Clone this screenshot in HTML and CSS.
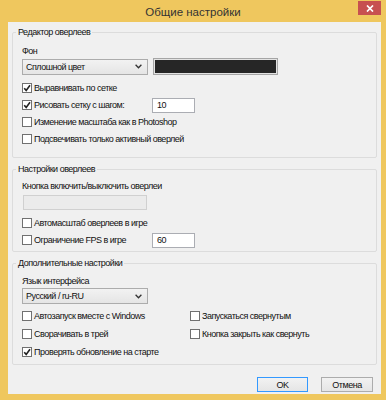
FILE: index.html
```html
<!DOCTYPE html>
<html lang="ru">
<head>
    <meta charset="UTF-8">
    <title>Общие настройки</title>
    <link rel="stylesheet" href="styles.css">
</head>
<body>

<div class="window">
    <div class="titlebar">
        <span class="title">Общие настройки</span>
        <button class="close" type="button">
            <svg width="8" height="7" viewBox="0 0 8 7"><path d="M1 0.5 L7 6.5 M7 0.5 L1 6.5" stroke="#fff" stroke-width="1.7"/></svg>
        </button>
    </div>

    <div class="client">
        <!-- Редактор -->
        <fieldset class="group group-editor">
            <legend>Редактор оверлеев</legend>
            <div class="label">Фон</div>
            <div class="bg-row">
                <div class="combo">
                    <span>Сплошной цвет</span>
                    <svg width="7" height="5" viewBox="0 0 7 5"><polyline points="0.6,0.8 3.5,3.8 6.4,0.8" fill="none" stroke="#333" stroke-width="1.3"/></svg>
                </div>
                <button class="color-btn" type="button"><span class="swatch"></span></button>
            </div>
            <div class="checks">
                <label class="check"><span class="box"><svg width="8" height="8" viewBox="0 0 8 8"><path d="M1.2 4.2 L3.2 6.4 L7 1.2" fill="none" stroke="#222" stroke-width="1.6"/></svg></span>Выравнивать по сетке</label>
                <div class="step-row">
                    <label class="check"><span class="box"><svg width="8" height="8" viewBox="0 0 8 8"><path d="M1.2 4.2 L3.2 6.4 L7 1.2" fill="none" stroke="#222" stroke-width="1.6"/></svg></span>Рисовать сетку с шагом:</label>
                    <input type="text" class="num" value="10">
                </div>
                <label class="check"><span class="box"></span>Изменение масштаба как в Photoshop</label>
                <label class="check"><span class="box"></span>Подсвечивать только активный оверлей</label>
            </div>
        </fieldset>

        <!-- Оверлеи -->
        <fieldset class="group group-overlays">
            <legend>Настройки оверлеев</legend>
            <div class="label">Кнопка включить/выключить оверлеи</div>
            <div class="hotkey"></div>
            <div class="checks">
                <label class="check"><span class="box"></span>Автомасштаб оверлеев в игре</label>
                <div class="step-row">
                    <label class="check"><span class="box"></span>Ограничение FPS в игре</label>
                    <input type="text" class="num" value="60">
                </div>
            </div>
        </fieldset>

        <!-- Дополнительно -->
        <fieldset class="group group-extra">
            <legend>Дополнительные настройки</legend>
            <div class="label">Язык интерфейса</div>
            <div class="combo">
                <span>Русский / ru-RU</span>
                <svg width="7" height="5" viewBox="0 0 7 5"><polyline points="0.6,0.8 3.5,3.8 6.4,0.8" fill="none" stroke="#333" stroke-width="1.3"/></svg>
            </div>
            <div class="opts">
                <label class="check"><span class="box"></span>Автозапуск вместе с Windows</label>
                <label class="check"><span class="box"></span>Запускаться свернутым</label>
                <label class="check"><span class="box"></span>Сворачивать в трей</label>
                <label class="check"><span class="box"></span>Кнопка закрыть как свернуть</label>
                <label class="check"><span class="box"><svg width="8" height="8" viewBox="0 0 8 8"><path d="M1.2 4.2 L3.2 6.4 L7 1.2" fill="none" stroke="#222" stroke-width="1.6"/></svg></span>Проверять обновление на старте</label>
            </div>
        </fieldset>

        <div class="actions">
            <button type="button" class="btn btn-default">OK</button>
            <button type="button" class="btn">Отмена</button>
        </div>
    </div>
</div>

</body>
</html>
```

FILE: styles.css
```css
body {
    margin: 0;
    width: 386px;
    height: 400px;
    background: #efc75e;
    font-family: "Liberation Sans", Arial, sans-serif;
    font-size: 9px;
    letter-spacing: -0.5px;
    color: #111;
}
.window {
    display: flex;
    flex-direction: column;
    height: 400px;
}
.titlebar {
    position: relative;
    height: 22px;
    display: flex;
    justify-content: center;
    align-items: center;
}
.title {
    font-size: 11.5px;
    letter-spacing: 0;
    color: #333;
    padding-top: 2px;
}
.close {
    position: absolute;
    top: 1px;
    right: 5px;
    width: 23px;
    height: 14px;
    padding: 0;
    border: none;
    background: #c75050;
    display: flex;
    align-items: center;
    justify-content: center;
}
.client {
    flex: 1;
    margin: 0 5px 6px 8px;
    padding: 5px 4px 0;
    background: #f0f0f0;
    display: flex;
    flex-direction: column;
}

/* группы */
.group {
    margin: 0;
    min-width: 0;
    border: 1px solid #dcdcdc;
    border-radius: 2px;
    padding: 8px 9px 10px;
}
.group + .group {
    margin-top: 6px;
}
.group legend {
    margin-left: -6px;
    padding: 0 2px;
    line-height: 11px;
}
.group-overlays {
    padding-top: 6px;
    padding-bottom: 3px;
}
.group-extra {
    padding-top: 7px;
    padding-bottom: 4px;
}
.label {
    line-height: 11px;
}

/* поля */
.bg-row {
    display: flex;
    align-items: center;
    gap: 5px;
    margin-top: 1px;
}
.combo {
    width: 126px;
    height: 16px;
    box-sizing: border-box;
    border: 1px solid #acacac;
    background: linear-gradient(#f2f2f2, #e5e5e5);
    display: flex;
    align-items: center;
    justify-content: space-between;
    padding: 0 5px 0 3px;
}
.group-extra .combo {
    margin-top: 1px;
}
.color-btn {
    width: 125px;
    height: 17px;
    padding: 1px;
    border: 1px solid #a5a5a5;
    background: #e3e3e3;
}
.swatch {
    display: block;
    height: 100%;
    background: #262626;
}
.hotkey {
    width: 124px;
    height: 15px;
    box-sizing: border-box;
    margin: 3px 0 0 1px;
    border: 1px solid #d0d0d0;
    background: #ebebeb;
}
.num {
    width: 43px;
    height: 15px;
    box-sizing: border-box;
    margin: 0;
    padding: 0 4px;
    border: 1px solid #abadb3;
    background: #fff;
    font: inherit;
    letter-spacing: inherit;
    line-height: 13px;
    color: #111;
}

/* чекбоксы */
.checks {
    display: flex;
    flex-direction: column;
    gap: 1px;
    margin-top: 5px;
}
.check {
    display: flex;
    align-items: center;
    gap: 2px;
    height: 16px;
    white-space: nowrap;
}
.box {
    width: 10px;
    height: 10px;
    box-sizing: border-box;
    border: 1px solid #707070;
    background: #fff;
    display: flex;
    align-items: center;
    justify-content: center;
}
.step-row {
    display: grid;
    grid-template-columns: 130px 43px;
    align-items: center;
}
.opts {
    display: grid;
    grid-template-columns: 168px auto;
    row-gap: 2px;
    margin-top: 4px;
}

/* кнопки */
.actions {
    display: flex;
    justify-content: flex-end;
    gap: 13px;
    margin-top: 12px;
    padding-right: 4px;
}
.btn {
    width: 52px;
    height: 15px;
    padding: 0;
    border: 1px solid #acacac;
    background: linear-gradient(#f2f2f2, #e5e5e5);
    font: inherit;
    letter-spacing: inherit;
    color: #111;
}
.btn-default {
    width: 51px;
    border-color: #3399ff;
}
```
